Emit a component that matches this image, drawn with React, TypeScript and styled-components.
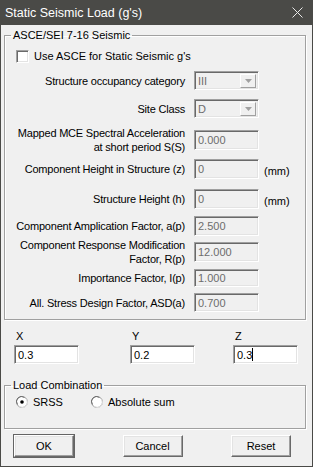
import React from "react";
import styled, { createGlobalStyle, css } from "styled-components";

const Global = createGlobalStyle`
  html, body { margin: 0; padding: 0; background: #f0f0f0; }
  body { font-family: "Liberation Sans", Arial, sans-serif; font-size: 11px; color: #000; }
  * { box-sizing: border-box; }
`;

const Frame = styled.div`
  width: 313px;
  height: 467px;
  background: #f0f0f0;
  border: 1px solid #4a4a47;
  border-top: none;
  display: flex;
  flex-direction: column;
  overflow: hidden;
`;

const TitleBar = styled.div`
  height: 25px;
  flex-shrink: 0;
  background: #4a4a47;
  margin: 0 -1px;
  display: flex;
  align-items: center;
  justify-content: space-between;
  padding: 0 10px 0 5px;
  color: #fff;
  font-size: 12.5px;
`;

const Body = styled.div`
  flex: 1;
  display: flex;
  flex-direction: column;
  padding: 4px 6px 0 3px;
  & > * { flex-shrink: 0; }
`;

const Group = styled.fieldset`
  margin: 0;
  padding: 0 0 0 0;
  border: 1px solid #a0a0a0;
  box-shadow: 1px 1px 0 #fff, inset 1px 1px 0 #fff;
`;

const SeismicGroup = styled(Group)`
  padding-bottom: 7px;
`;

const Legend = styled.legend`
  margin-left: 6px;
  padding: 0 2px;
  line-height: 13px;
`;

const CheckRow = styled.label`
  display: flex;
  align-items: center;
  gap: 5px;
  margin: 7px 0 0 11px;
  height: 14px;
`;

const CheckBox = styled.span`
  width: 13px;
  height: 13px;
  background: #fff;
  border: 1px solid;
  border-color: #a0a0a0 #fff #fff #a0a0a0;
  box-shadow: inset 1px 1px 0 #696969, inset -1px -1px 0 #e3e3e3;
`;

const Row = styled.div<{ $top: number }>`
  display: grid;
  grid-template-columns: 180px 65px auto;
  column-gap: 9px;
  align-items: center;
  margin-top: ${(p) => p.$top}px;
`;

const Label = styled.div`
  text-align: right;
  line-height: 14px;
  letter-spacing: -0.2px;
  white-space: pre-line;
`;

const sunken = css`
  border: 1px solid;
  border-color: #a0a0a0 #fff #fff #a0a0a0;
  box-shadow: inset 1px 1px 0 #696969, inset -1px -1px 0 #e3e3e3;
`;

const Field = styled.div<{ $h?: number; $enabled?: boolean }>`
  ${sunken};
  height: ${(p) => p.$h ?? 20}px;
  background: ${(p) => (p.$enabled ? "#fff" : "#f0f0f0")};
  color: ${(p) => (p.$enabled ? "#000" : "#6d6d6d")};
  padding: 0 3px;
  display: flex;
  align-items: center;
  line-height: 14px;
`;

const Combo = styled(Field)`
  justify-content: space-between;
  padding-right: 2px;
`;

const DropBtn = styled.span`
  width: 16px;
  height: 14px;
  background: #f0f0f0;
  border: 1px solid;
  border-color: #fff #a0a0a0 #a0a0a0 #fff;
  display: flex;
  align-items: center;
  justify-content: center;
`;

const Unit = styled.span`
  margin-left: -4px;
  padding-top: 3px;
`;

const AxisGrid = styled.div`
  display: grid;
  grid-template-columns: 116px 103px 65px;
  margin: 10px 0 0 10px;
  row-gap: 3px;
`;

const AxisLabel = styled.div`
  padding-left: 2px;
  line-height: 12px;
`;

const AxisInput = styled(Field)`
  width: 65px;
  height: 19px;
`;

const Cursor = styled.span`
  display: inline-block;
  width: 1px;
  height: 13px;
  background: #000;
`;

const LoadGroup = styled(Group)`
  margin-top: 15px;
  height: 50px;
`;

const RadioRow = styled.div`
  display: flex;
  align-items: center;
  margin: 4px 0 0 11px;
`;

const RadioItem = styled.label<{ $w?: number }>`
  display: flex;
  align-items: center;
  gap: 5px;
  width: ${(p) => p.$w ?? 0}px;
`;

const Buttons = styled.div`
  display: flex;
  justify-content: space-between;
  padding: 6px 15px 0 10px;
`;

const Btn = styled.div<{ $default?: boolean }>`
  width: 60px;
  height: 22px;
  display: flex;
  align-items: center;
  justify-content: center;
  background: #f0f0f0;
  border: 1px solid;
  border-color: #fff #696969 #696969 #fff;
  box-shadow: inset -1px -1px 0 #a0a0a0, inset 1px 1px 0 #e3e3e3;
  ${(p) =>
    p.$default &&
    css`
      outline: 1px solid #646464;
    `}
`;

const Radio = ({ checked }: { checked?: boolean }) => (
  <svg width="12" height="12" viewBox="0 0 12 12">
    <circle cx="6" cy="6" r="5.5" fill="#fff" stroke="#a0a0a0" />
    <path d="M1.5 8.5 A5 5 0 0 1 8.5 1.5" fill="none" stroke="#696969" />
    <path d="M3.5 10.5 A5 5 0 0 0 10.5 3.5" fill="none" stroke="#e3e3e3" />
    {checked && <circle cx="6" cy="6" r="1.8" fill="#000" />}
  </svg>
);

const Arrow = () => (
  <svg width="7" height="4" viewBox="0 0 7 4">
    <path d="M0 0 H7 L3.5 4 Z" fill="#a0a0a0" />
  </svg>
);

const CloseIcon = () => (
  <svg width="11" height="11" viewBox="0 0 11 11">
    <path d="M0.5 0.5 L10.5 10.5 M10.5 0.5 L0.5 10.5" stroke="#e8e8e8" strokeWidth="1" />
  </svg>
);

type RowDef = {
  label: string;
  value: string;
  top: number;
  combo?: boolean;
  unit?: string;
  h?: number;
};

const rows: RowDef[] = [
  { label: "Structure occupancy category", value: "III", top: 8, combo: true, h: 19 },
  { label: "Site Class", value: "D", top: 9, combo: true, h: 19 },
  { label: "Mapped MCE Spectral Acceleration\nat short period S(S)", value: "0.000", top: 8 },
  { label: "Component Height in Structure (z)", value: "0", top: 5, unit: "(mm)" },
  { label: "Structure Height (h)", value: "0", top: 10, unit: "(mm)" },
  { label: "Component Amplication Factor, a(p)", value: "2.500", top: 7 },
  { label: "Component Response Modification\nFactor, R(p)", value: "12.000", top: 2 },
  { label: "Importance Factor, I(p)", value: "1.000", top: 3, h: 18 },
  { label: "All. Stress Design Factor, ASD(a)", value: "0.700", top: 6, h: 19 },
];

export default function App() {
  return (
    <>
      <Global />
      <Frame>
        <TitleBar>
          <span>Static Seismic Load (g's)</span>
          <CloseIcon />
        </TitleBar>
        <Body>
          <SeismicGroup>
            <Legend>ASCE/SEI 7-16 Seismic</Legend>
            <CheckRow>
              <CheckBox />
              <span>Use ASCE for Static Seismic g's</span>
            </CheckRow>
            {rows.map((r) => (
              <Row key={r.label} $top={r.top}>
                <Label>{r.label}</Label>
                {r.combo ? (
                  <Combo $h={r.h}>
                    <span>{r.value}</span>
                    <DropBtn>
                      <Arrow />
                    </DropBtn>
                  </Combo>
                ) : (
                  <Field $h={r.h}>{r.value}</Field>
                )}
                {r.unit ? <Unit>{r.unit}</Unit> : <span />}
              </Row>
            ))}
          </SeismicGroup>
          <AxisGrid>
            <AxisLabel>X</AxisLabel>
            <AxisLabel>Y</AxisLabel>
            <AxisLabel>Z</AxisLabel>
            <div>
              <AxisInput $enabled>0.3</AxisInput>
            </div>
            <div>
              <AxisInput $enabled>0.2</AxisInput>
            </div>
            <div>
              <AxisInput $enabled>
                0.3
                <Cursor />
              </AxisInput>
            </div>
          </AxisGrid>
          <LoadGroup>
            <Legend>Load Combination</Legend>
            <RadioRow>
              <RadioItem $w={75}>
                <Radio checked />
                <span>SRSS</span>
              </RadioItem>
              <RadioItem $w={120}>
                <Radio />
                <span>Absolute sum</span>
              </RadioItem>
            </RadioRow>
          </LoadGroup>
          <Buttons>
            <Btn $default>OK</Btn>
            <Btn>Cancel</Btn>
            <Btn>Reset</Btn>
          </Buttons>
        </Body>
      </Frame>
    </>
  );
}
